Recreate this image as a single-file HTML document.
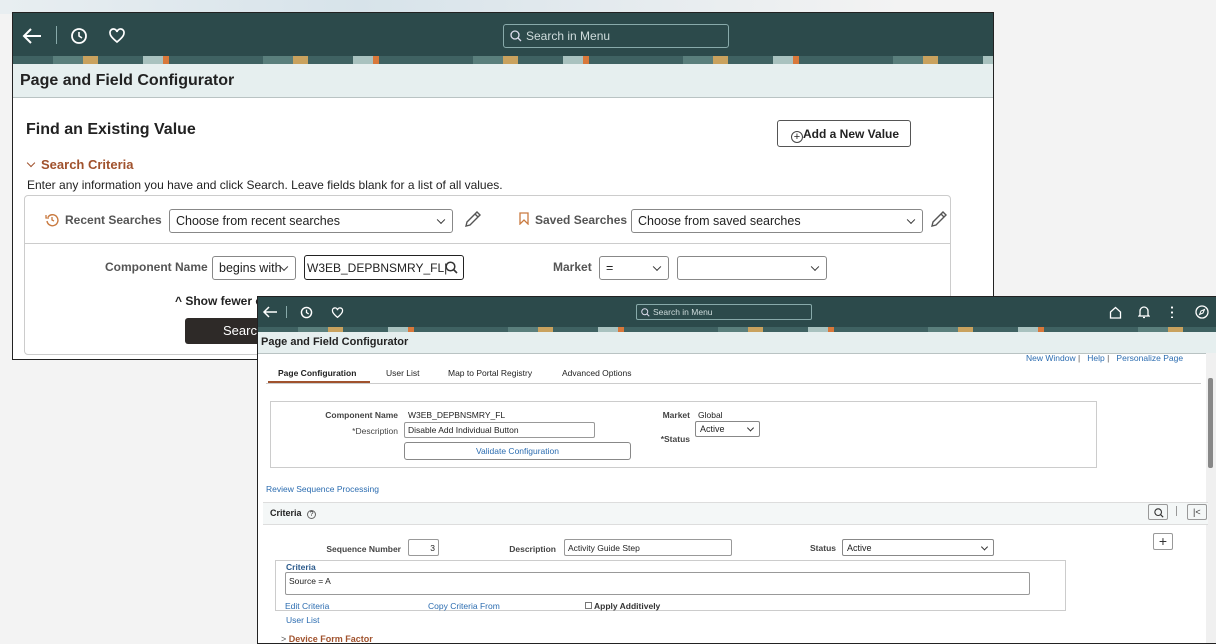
<!DOCTYPE html>
<html><head><meta charset="utf-8"><style>
*{box-sizing:border-box;margin:0;padding:0}
body{width:1216px;height:643px;overflow:hidden;background:#f3f3f3;font-family:"Liberation Sans",Arial,sans-serif;position:relative;color:#333}
.a{position:absolute}
.win{position:absolute;background:#fff;border:1px solid #333;overflow:hidden}
.hdr{position:absolute;left:0;right:0;top:0;background:#2c4a4b}
.ban{position:absolute;left:0;right:0;background:repeating-linear-gradient(90deg,#3f6262 0 40px,#5a7f7c 40px 70px,#c9a25e 70px 85px,#3f6262 85px 130px,#a9c2bf 130px 150px,#d9783a 150px 156px,#3f6262 156px 210px)}
.ttl{position:absolute;left:0;right:0;background:#e6efef;border-bottom:1px solid #b9c3c3;font-weight:bold;color:#222}
.sel{position:absolute;border:1px solid #888;border-radius:3px;background:#fff;font-size:12.5px;color:#222;padding-left:6px;display:flex;align-items:center}
.sel:after{content:"";position:absolute;right:8px;top:50%;width:5px;height:5px;border-right:1.5px solid #333;border-bottom:1.5px solid #333;transform:translateY(-70%) rotate(45deg)}
.s .sel{font-size:9px;border-radius:2px;padding-left:4px}
.s .sel:after{width:4px;height:4px;border-width:1px;right:6px}
.lbl{position:absolute;font-weight:bold;color:#555;font-size:12px}
.s{font-size:9px}
.s .l{position:absolute;font-weight:bold;color:#444;font-size:8.5px;text-align:right}
.lk{position:absolute;color:#2b6cb0;font-size:8.5px}
.inp{position:absolute;border:1px solid #999;background:#fff;font-size:8.5px;padding-left:3px;display:flex;align-items:center;border-radius:2px;color:#222}
</style></head><body>
<div class="a" style="left:0;top:0;width:900px;height:14px;background:linear-gradient(90deg,#e8eef1,#d7e3ea 40%,#f3f3f3)"></div>

<!-- Window 1 -->
<div class="win" style="left:12px;top:12px;width:982px;height:348px;border-color:#222">
 <div class="hdr" style="height:43px">
  <svg class="a" style="left:8px;top:14px" width="22" height="18" viewBox="0 0 22 18"><path d="M20 9H3M10 2L3 9l7 7" stroke="#fff" stroke-width="2" fill="none"/></svg>
  <div class="a" style="left:43px;top:13px;width:1px;height:18px;background:#8aa"></div>
  <svg class="a" style="left:57px;top:14px" width="18" height="18" viewBox="0 0 18 18"><circle cx="9" cy="9" r="7" stroke="#fff" stroke-width="1.8" fill="none"/><path d="M9 5v4l3 2" stroke="#fff" stroke-width="1.6" fill="none"/></svg>
  <svg class="a" style="left:95px;top:15px" width="18" height="16" viewBox="0 0 18 16"><path d="M9 14C3 9 2 7 2 5a3.5 3.5 0 0 1 7-1 3.5 3.5 0 0 1 7 1c0 2-1 4-7 9z" stroke="#fff" stroke-width="1.7" fill="none"/></svg>
  <div class="a" style="left:490px;top:11px;width:226px;height:24px;border:1px solid #8aa;border-radius:3px;color:#cfdcdc;font-size:12px;padding:4px 0 0 22px">Search in Menu
   <svg class="a" style="left:6px;top:5px" width="12" height="12" viewBox="0 0 12 12"><circle cx="5" cy="5" r="4" stroke="#dde" stroke-width="1.3" fill="none"/><path d="M8 8l3 3" stroke="#dde" stroke-width="1.3"/></svg></div>
 </div>
 <div class="ban" style="top:43px;height:8px"></div>
 <div class="ttl" style="top:51px;height:34px;font-size:16px;padding:8px 0 0 7px">Page and Field Configurator</div>
 <div class="a" style="left:13px;top:108px;font-size:16px;font-weight:bold;color:#222">Find an Existing Value</div>
 <div class="a" style="left:764px;top:107px;width:134px;height:27px;border:1px solid #555;border-radius:3px;font-size:12px;font-weight:bold;color:#222;padding:6px 0 0 13px;white-space:nowrap"><span style="display:inline-block;width:12px;height:12px;border:1px solid #444;border-radius:50%;font-size:11px;line-height:10px;text-align:center;font-weight:normal;vertical-align:-2px">+</span>Add a New Value</div>
 <div class="a" style="left:14px;top:144px;font-size:13px;font-weight:bold;color:#a0522d"><span style="display:inline-block;width:6px;height:6px;border-right:1.5px solid #a0522d;border-bottom:1.5px solid #a0522d;transform:rotate(45deg);margin:0 7px 3px 1px"></span>Search Criteria</div>
 <div class="a" style="left:14px;top:165px;font-size:12px;color:#222">Enter any information you have and click Search. Leave fields blank for a list of all values.</div>
 <div class="a" style="left:11px;top:182px;width:927px;height:160px;border:1px solid #ccc;border-radius:4px"></div>
 <div class="a" style="left:12px;top:230px;width:925px;height:1px;background:#ccc"></div>
 <svg class="a" style="left:32px;top:200px" width="14" height="14" viewBox="0 0 14 14"><path d="M3 4a5.5 5.5 0 1 1-1 4" stroke="#c97a40" stroke-width="1.4" fill="none"/><path d="M1 2v3h3M7 4v3l2 1" stroke="#c97a40" stroke-width="1.3" fill="none"/></svg>
 <div class="lbl" style="left:52px;top:200px">Recent Searches</div>
 <div class="sel" style="left:156px;top:196px;width:284px;height:24px">Choose from recent searches</div>
 <svg class="a" style="left:450px;top:196px" width="20" height="20" viewBox="0 0 20 20"><path d="M3 17l1-4L14 3l3 3L7 16z M12 5l3 3" stroke="#555" stroke-width="1.4" fill="none"/></svg>
 <svg class="a" style="left:506px;top:199px" width="10" height="13" viewBox="0 0 10 13"><path d="M1 1h8v11L5 8 1 12z" stroke="#c97a40" stroke-width="1.3" fill="none"/></svg>
 <div class="lbl" style="left:522px;top:200px">Saved Searches</div>
 <div class="sel" style="left:618px;top:196px;width:292px;height:24px">Choose from saved searches</div>
 <svg class="a" style="left:916px;top:196px" width="20" height="20" viewBox="0 0 20 20"><path d="M3 17l1-4L14 3l3 3L7 16z M12 5l3 3" stroke="#555" stroke-width="1.4" fill="none"/></svg>
 <div class="lbl" style="left:92px;top:247px">Component Name</div>
 <div class="sel" style="left:199px;top:243px;width:84px;height:24px">begins with</div>
 <div class="a" style="left:291px;top:242px;width:160px;height:25px;border:1.5px solid #222;border-radius:3px;font-size:12px;padding:5px 0 0 2px;color:#222">W3EB_DEPBNSMRY_FL|
  <svg class="a" style="left:140px;top:5px" width="13" height="13" viewBox="0 0 13 13"><circle cx="5.5" cy="5.5" r="4.3" stroke="#333" stroke-width="1.5" fill="none"/><path d="M8.5 8.5l3.5 3.5" stroke="#333" stroke-width="1.6"/></svg></div>
 <div class="lbl" style="left:540px;top:247px">Market</div>
 <div class="sel" style="left:586px;top:243px;width:70px;height:24px">=</div>
 <div class="sel" style="left:664px;top:243px;width:150px;height:24px"></div>
 <div class="a" style="left:162px;top:281px;font-size:12px;font-weight:bold;color:#222">^ Show fewer options</div>
 <div class="a" style="left:172px;top:305px;width:90px;height:26px;background:#2e2a28;border-radius:3px;color:#fff;font-size:13px;padding:5px 0 0 38px">Search</div>
</div>

<!-- Window 2 -->
<div class="win s" style="left:257px;top:296px;width:960px;height:348px;border-color:#222">
 <div class="hdr" style="height:30px">
  <svg class="a" style="left:4px;top:9px" width="16" height="12" viewBox="0 0 16 12"><path d="M15 6H2M7 1L2 6l5 5" stroke="#fff" stroke-width="1.5" fill="none"/></svg>
  <div class="a" style="left:28px;top:9px;width:1px;height:12px;background:#8aa"></div>
  <svg class="a" style="left:42px;top:9px" width="13" height="13" viewBox="0 0 18 18"><circle cx="9" cy="9" r="7" stroke="#fff" stroke-width="2" fill="none"/><path d="M9 5v4l3 2" stroke="#fff" stroke-width="1.8" fill="none"/></svg>
  <svg class="a" style="left:73px;top:10px" width="13" height="12" viewBox="0 0 18 16"><path d="M9 14C3 9 2 7 2 5a3.5 3.5 0 0 1 7-1 3.5 3.5 0 0 1 7 1c0 2-1 4-7 9z" stroke="#fff" stroke-width="1.8" fill="none"/></svg>
  <div class="a" style="left:378px;top:7px;width:176px;height:16px;border:1px solid #8aa;border-radius:2px;color:#cfdcdc;font-size:8.5px;padding:2px 0 0 16px">Search in Menu
   <svg class="a" style="left:4px;top:3px" width="9" height="9" viewBox="0 0 12 12"><circle cx="5" cy="5" r="4" stroke="#dde" stroke-width="1.3" fill="none"/><path d="M8 8l3 3" stroke="#dde" stroke-width="1.3"/></svg></div>
  <svg class="a" style="left:851px;top:9px" width="13" height="13" viewBox="0 0 13 13"><path d="M1.5 6L6.5 1.5 11.5 6v6h-10z" stroke="#fff" stroke-width="1.3" fill="none"/></svg>
  <svg class="a" style="left:880px;top:8px" width="12" height="14" viewBox="0 0 12 14"><path d="M2 10V6a4 4 0 0 1 8 0v4l1 1H1zM5 12.5h2" stroke="#fff" stroke-width="1.3" fill="none"/></svg>
  <div class="a" style="left:913px;top:8px;width:2px;height:13px;background:radial-gradient(circle,#fff 1px,transparent 1.2px) 0 0/2px 5px"></div>
  <svg class="a" style="left:937px;top:8px" width="14" height="14" viewBox="0 0 14 14"><circle cx="7" cy="7" r="6" stroke="#fff" stroke-width="1.3" fill="none"/><path d="M9.5 4.5L8 8 4.5 9.5 6 6z" stroke="#fff" stroke-width="1" fill="none"/></svg>
 </div>
 <div class="ban" style="top:30px;height:5px"></div>
 <div class="ttl" style="top:35px;height:22px;font-size:11px;padding:4px 0 0 3px">Page and Field Configurator</div>
 <div class="lk" style="left:768px;top:56px">New Window <span style="color:#555">|</span> &nbsp; Help <span style="color:#555">|</span> &nbsp; Personalize Page</div>
 <div class="a" style="left:948px;top:56px;width:10px;height:292px;background:#f0f0f0"><div class="a" style="left:2px;top:25px;width:5px;height:90px;background:#888;border-radius:2px"></div></div>
 <div class="a" style="left:20px;top:71px;font-size:8.5px;font-weight:bold;color:#222">Page Configuration</div>
 <div class="a" style="left:10px;top:84px;width:102px;height:2px;background:#a0522d"></div>
 <div class="a" style="left:128px;top:71px;font-size:8.5px;color:#222">User List</div>
 <div class="a" style="left:190px;top:71px;font-size:8.5px;color:#222">Map to Portal Registry</div>
 <div class="a" style="left:304px;top:71px;font-size:8.5px;color:#222">Advanced Options</div>
 <div class="a" style="left:8px;top:86px;width:935px;height:1px;background:#ccc"></div>
 <div class="a" style="left:12px;top:104px;width:827px;height:67px;border:1px solid #ccc"></div>
 <div class="l" style="left:40px;top:113px;width:100px">Component Name</div>
 <div class="a" style="left:150px;top:113px;font-size:8.5px;color:#222">W3EB_DEPBNSMRY_FL</div>
 <div class="l" style="left:40px;top:129px;width:100px;font-weight:normal">*Description</div>
 <div class="inp" style="left:146px;top:125px;width:191px;height:16px">Disable Add Individual Button</div>
 <div class="a" style="left:146px;top:145px;width:227px;height:18px;border:1px solid #888;border-radius:3px;color:#2b6cb0;font-size:8.5px;text-align:center;padding-top:3px">Validate Configuration</div>
 <div class="l" style="left:380px;top:113px;width:52px">Market</div>
 <div class="a" style="left:440px;top:113px;font-size:8.5px;color:#222">Global</div>
 <div class="l" style="left:380px;top:137px;width:52px">*Status</div>
 <div class="sel" style="left:437px;top:124px;width:65px;height:16px">Active</div>
 <div class="lk" style="left:8px;top:187px">Review Sequence Processing</div>
 <div class="a" style="left:5px;top:205px;width:945px;height:23px;background:#f4f7f7;border-top:1px solid #ddd;border-bottom:1px solid #ddd"></div>
 <div class="a" style="left:12px;top:211px;font-size:9px;font-weight:bold;color:#222">Criteria <span style="display:inline-block;width:9px;height:9px;border:1px solid #666;border-radius:50%;font-size:7px;line-height:8px;text-align:center;font-weight:normal;margin-left:3px">?</span></div>
 <div class="a" style="left:890px;top:207px;width:20px;height:16px;border:1px solid #999;border-radius:2px"><svg class="a" style="left:5px;top:3px" width="10" height="10" viewBox="0 0 12 12"><circle cx="5" cy="5" r="4" stroke="#333" stroke-width="1.3" fill="none"/><path d="M8 8l3 3" stroke="#333" stroke-width="1.4"/></svg></div>
 <div class="a" style="left:918px;top:209px;width:1px;height:10px;background:#999"></div>
 <div class="a" style="left:929px;top:207px;width:20px;height:16px;border:1px solid #999;border-radius:2px;font-size:9px;padding:2px 0 0 5px">|&lt;</div>
 <div class="l" style="left:40px;top:247px;width:103px">Sequence Number</div>
 <div class="inp" style="left:150px;top:242px;width:31px;height:17px;justify-content:flex-end;padding-right:3px">3</div>
 <div class="l" style="left:230px;top:247px;width:68px">Description</div>
 <div class="inp" style="left:306px;top:242px;width:168px;height:17px">Activity Guide Step</div>
 <div class="l" style="left:530px;top:246px;width:48px">Status</div>
 <div class="sel" style="left:584px;top:242px;width:152px;height:17px">Active</div>
 <div class="a" style="left:895px;top:236px;width:20px;height:17px;border:1px solid #999;border-radius:2px;font-size:14px;text-align:center;line-height:15px;color:#333">+</div>
 <div class="a" style="left:17px;top:263px;width:791px;height:51px;border:1px solid #ccc"></div>
 <div class="a" style="left:28px;top:265px;font-size:8.5px;font-weight:bold;color:#2b5a8c">Criteria</div>
 <div class="inp" style="left:27px;top:275px;width:745px;height:23px;align-items:flex-start;padding-top:3px">Source = A</div>
 <div class="lk" style="left:27px;top:304px">Edit Criteria</div>
 <div class="lk" style="left:170px;top:304px">Copy Criteria From</div>
 <div class="a" style="left:327px;top:304px;font-size:8.5px;font-weight:bold;color:#333"><span style="display:inline-block;width:7px;height:7px;border:1px solid #777;margin-right:2px"></span>Apply Additively</div>
 <div class="lk" style="left:28px;top:318px">User List</div>
 <div class="a" style="left:23px;top:337px;font-size:9px;font-weight:bold;color:#a0522d"><span style="color:#555;font-weight:normal">&gt;</span> Device Form Factor</div>
</div>
</body></html>
